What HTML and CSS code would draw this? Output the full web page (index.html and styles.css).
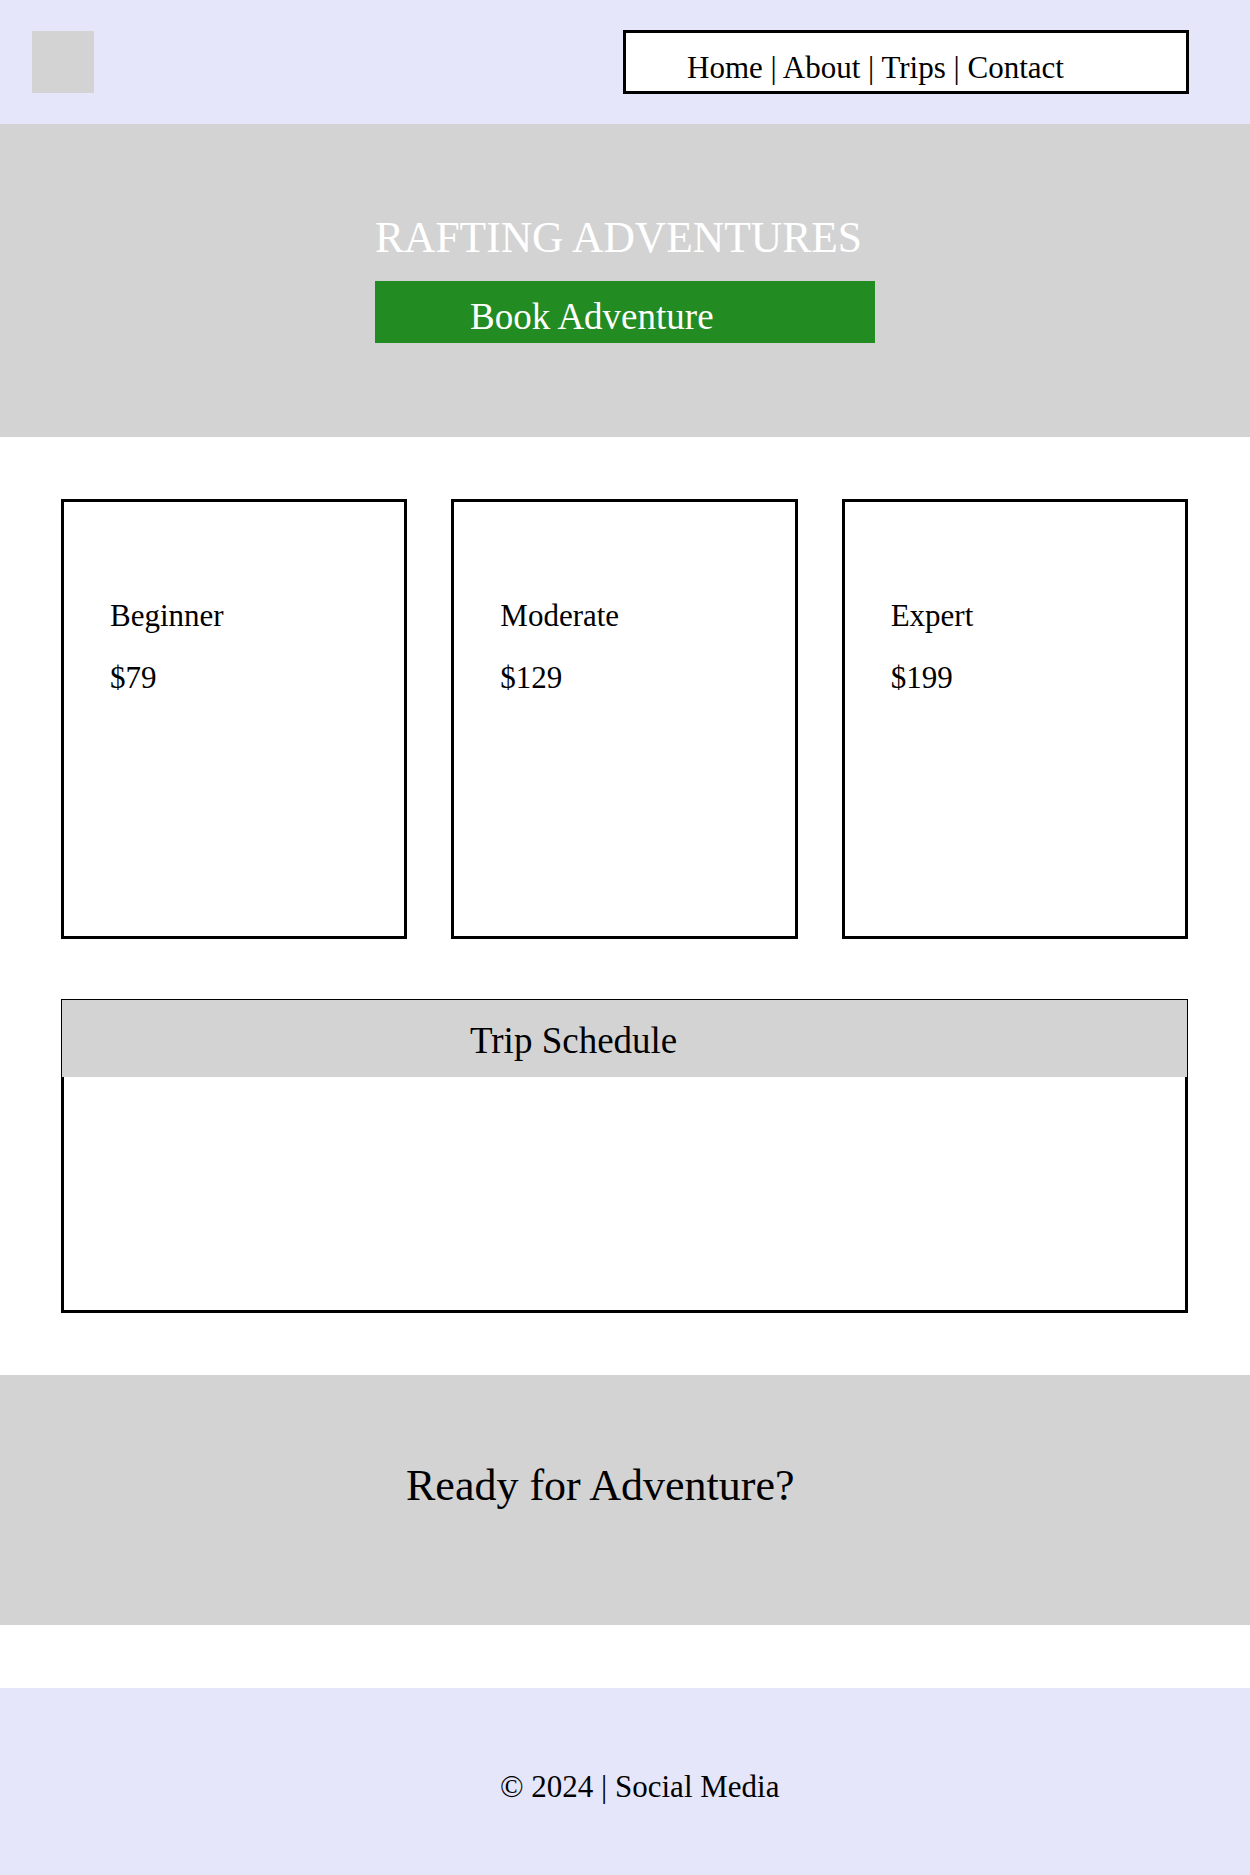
FILE: index.html
```html
<!DOCTYPE html>
<html lang="en">
  <head>
    <meta charset="UTF-8" />
    <meta name="viewport" content="width=device-width, initial-scale=1.0" />
    <title>Rafting Adventures</title>
    <link rel="stylesheet" href="styles.css">
  </head>
  <body>
    <div class="header">
      <div class="logo"></div>
      <div class="nav">Home | About | Trips | Contact</div>
    </div>

    <div class="hero">
      <div class="hero-inner">
        <h1 class="hero-title">RAFTING ADVENTURES</h1>
        <a class="book-btn">Book Adventure</a>
      </div>
    </div>

    <div class="main">
      <div class="cards">
        <div class="card">
          <p>Beginner</p>
          <p>$79</p>
        </div>
        <div class="card">
          <p>Moderate</p>
          <p>$129</p>
        </div>
        <div class="card">
          <p>Expert</p>
          <p>$199</p>
        </div>
      </div>

      <div class="schedule">
        <div class="schedule-head">Trip Schedule</div>
      </div>
    </div>

    <div class="cta">
      <h2 class="cta-title">Ready for Adventure?</h2>
    </div>

    <div class="footer">&copy; 2024 | Social Media</div>
  </body>
</html>
```

FILE: styles.css
```css
body {
  margin: 0;
  font-family: "Liberation Serif", "Times New Roman", serif;
  color: #000;
  background-color: #fff;
}
.header {
  height: 124px;
  display: flex;
  align-items: center;
  justify-content: space-between;
  padding: 0 61px 0 32px;
  background-color: #e6e6fa;
}
.logo {
  width: 62px;
  height: 62px;
  background-color: #d3d3d3;
}
.nav {
  width: 566px;
  height: 64px;
  box-sizing: border-box;
  border: 3px solid #000;
  background-color: #fff;
  padding: 17px 0 0 61px;
  font-size: 31px;
}
.hero {
  background-color: #d3d3d3;
  padding: 88px 0 94px;
}
.hero-inner {
  width: 500px;
  margin: 0 auto;
}
.hero-title {
  margin: 0 0 19px;
  font-size: 43.5px;
  font-weight: normal;
  color: #fff;
}
.book-btn {
  display: block;
  height: 62px;
  box-sizing: border-box;
  padding: 14px 0 0 95px;
  background-color: #228b22;
  color: #fff;
  font-size: 37px;
}
.main {
  padding: 62px 62px 0 61px;
}
.cards {
  display: grid;
  grid-template-columns: repeat(3, 1fr);
  gap: 44px;
}
.card {
  height: 440px;
  box-sizing: border-box;
  border: 3px solid #000;
  padding: 96px 0 0 46px;
}
.card p {
  margin: 0 0 26px;
  font-size: 31px;
}
.schedule {
  margin-top: 60px;
  height: 314px;
  box-sizing: border-box;
  border: 3px solid #000;
  border-top: 0;
}
.schedule-head {
  margin: 0 -3px;
  height: 78px;
  box-sizing: border-box;
  border: 1px solid #000;
  border-bottom: 0;
  padding: 19px 0 0 408px;
  background-color: #d3d3d3;
  font-size: 37px;
}
.cta {
  margin-top: 62px;
  height: 250px;
  box-sizing: border-box;
  padding: 85px 0 0 406px;
  background-color: #d3d3d3;
}
.cta-title {
  margin: 0;
  font-size: 44px;
  font-weight: normal;
}
.footer {
  margin-top: 63px;
  height: 187px;
  box-sizing: border-box;
  padding: 81px 0 0 500px;
  background-color: #e6e6fa;
  font-size: 31px;
}
```
